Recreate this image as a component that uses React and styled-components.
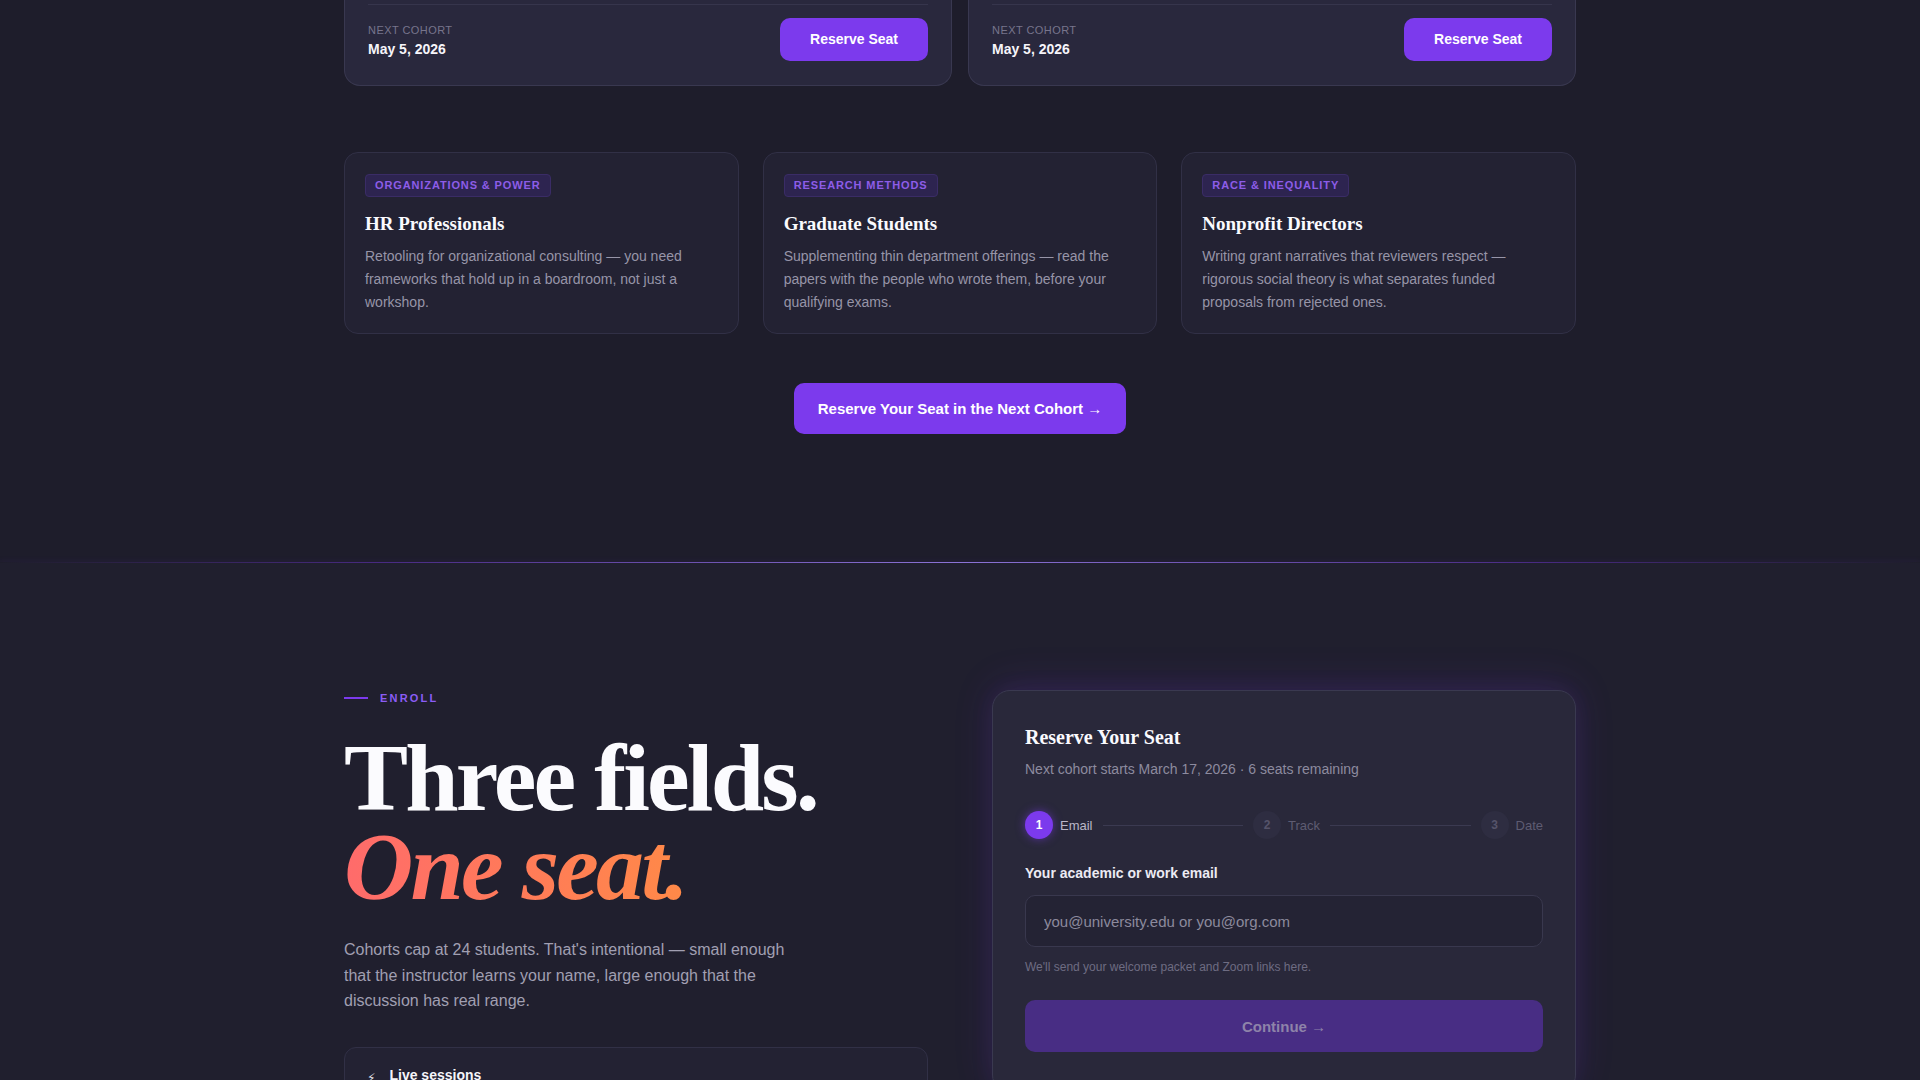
import styled, { createGlobalStyle } from 'styled-components';

const GlobalStyle = createGlobalStyle`
  * { box-sizing: border-box; }
  body {
    margin: 0;
    background: #1e1d2b;
    font-family: 'Liberation Sans', Arial, sans-serif;
    color: #f4f3f8;
  }
`;

const serif = `'Liberation Serif', 'Times New Roman', serif`;

export const Page = styled.div`
  min-height: 100vh;
  overflow: hidden;
`;

export const Section = styled.section`
  padding: ${(p) => p.$pad || '0'};
  background: ${(p) => p.$bg || 'transparent'};
`;

export const Container = styled.div`
  width: 1232px;
  margin: 0 auto;
`;

export const CohortGrid = styled.div`
  display: grid;
  grid-template-columns: 1fr 1fr;
  gap: 16px;
`;

export const CohortCard = styled.div`
  background: #29283d;
  border: 1px solid #393850;
  border-top: none;
  border-radius: 0 0 16px 16px;
  padding: 4px 23px 24px;
`;

export const CohortFooter = styled.div`
  display: flex;
  align-items: center;
  justify-content: space-between;
  border-top: 1px solid #36354c;
  padding-top: 13px;
`;

export const MetaLabel = styled.div`
  font-size: 11px;
  text-transform: uppercase;
  letter-spacing: 0.04em;
  color: #77758c;
  line-height: 14px;
  margin-top: 1px;
`;

export const MetaValue = styled.div`
  font-size: 14px;
  font-weight: 700;
  color: #f6f5fa;
  margin-top: 3px;
  line-height: 18px;
`;

export const Button = styled.button`
  border: none;
  border-radius: 10px;
  background: #7c3aed;
  color: #fff;
  font-family: 'Liberation Sans', Arial, sans-serif;
  font-weight: 700;
  font-size: ${(p) => (p.$big ? '15px' : '14px')};
  line-height: 19px;
  padding: ${(p) => (p.$big ? '16px 24px' : '12px 30px')};
  cursor: pointer;
`;

export const AudienceGrid = styled.div`
  display: grid;
  grid-template-columns: repeat(3, 1fr);
  gap: 24px;
  margin-top: 66px;
`;

export const AudienceCard = styled.div`
  background: #232233;
  border: 1px solid #313046;
  border-radius: 14px;
  padding: 21px 20px 19px;
`;

export const Tag = styled.span`
  display: inline-block;
  font-size: 11px;
  font-weight: 700;
  letter-spacing: 0.08em;
  text-transform: uppercase;
  color: #8d5de8;
  background: #2d2450;
  border: 1px solid #3a2c66;
  border-radius: 4px;
  padding: 4px 9px;
  line-height: 13px;
`;

export const CardTitle = styled.h3`
  font-family: ${serif};
  font-size: 19px;
  font-weight: 700;
  line-height: 26px;
  margin: 14px 0 0;
  color: #fafafe;
`;

export const CardText = styled.p`
  font-size: 14px;
  line-height: 23px;
  color: #9795a8;
  margin: 8px 0 0;
`;

export const CtaRow = styled.div`
  display: flex;
  justify-content: center;
  margin-top: 49px;
`;

export const GlowLine = styled.div`
  height: 1px;
  background: linear-gradient(
    90deg,
    rgba(124, 58, 237, 0) 0%,
    rgba(124, 58, 237, 0.45) 20%,
    #8b73d6 50%,
    rgba(124, 58, 237, 0.45) 80%,
    rgba(124, 58, 237, 0) 100%
  );
  box-shadow: 0 1px 6px rgba(124, 58, 237, 0.35);
`;

export const EnrollGrid = styled.div`
  display: grid;
  grid-template-columns: 1fr 1fr;
  gap: 64px;
  align-items: start;
`;

export const Eyebrow = styled.div`
  display: flex;
  align-items: center;
  gap: 12px;
  font-size: 11px;
  font-weight: 700;
  letter-spacing: 0.2em;
  color: #8b5cf6;
  line-height: 16px;
  &::before {
    content: '';
    width: 24px;
    height: 2px;
    background: #7c3aed;
  }
`;

export const Headline = styled.h2`
  font-family: ${serif};
  font-size: 96px;
  font-weight: 700;
  line-height: 89px;
  letter-spacing: -0.03em;
  margin: 27px 0 0;
  color: #fbfbfe;
`;

export const Accent = styled.em`
  display: inline-block;
  font-style: italic;
  background: linear-gradient(90deg, #ff6b6b 0%, #ff8a47 100%);
  -webkit-background-clip: text;
  background-clip: text;
  color: transparent;
  padding-right: 6px;
`;

export const Lead = styled.p`
  font-size: 16px;
  line-height: 25.6px;
  color: #a19fb2;
  max-width: 460px;
  margin: 26px 0 0;
`;

export const Feature = styled.div`
  margin-top: 33px;
  background: #232233;
  border: 1px solid #313046;
  border-radius: 12px;
  padding: 14px 22px 16px;
`;

export const FeatureHead = styled.div`
  display: flex;
  align-items: center;
  gap: 14px;
  font-size: 14px;
  font-weight: 700;
  line-height: 20px;
  color: #f6f5fa;
`;

export const FeatureIcon = styled.span`
  font-family: 'DejaVu Sans', sans-serif;
  font-size: 12px;
  color: #e8e6f0;
  margin-top: 6px;
`;

export const FormCard = styled.div`
  background: #29283a;
  border: 1px solid #3a3950;
  border-radius: 18px;
  padding: 32px 32px 40px;
  box-shadow: 0 -6px 40px rgba(124, 58, 237, 0.14), 0 0 24px rgba(124, 58, 237, 0.08);
`;

export const FormTitle = styled.h3`
  font-family: ${serif};
  font-size: 20px;
  font-weight: 700;
  line-height: 28px;
  margin: 0;
  color: #fafafe;
`;

export const FormSub = styled.p`
  font-size: 14px;
  line-height: 22px;
  color: #8d8b9f;
  margin: 7px 0 0;
`;

export const Stepper = styled.div`
  display: flex;
  align-items: center;
  gap: 10px;
  margin-top: 31px;
`;

export const Step = styled.div`
  display: flex;
  align-items: center;
  gap: 7px;
  font-size: 13px;
  color: ${(p) => (p.$active ? '#b9b7c8' : '#5e5c72')};
`;

export const StepDot = styled.span`
  width: 28px;
  height: 28px;
  border-radius: 50%;
  display: flex;
  align-items: center;
  justify-content: center;
  font-size: 12px;
  font-weight: 700;
  background: ${(p) => (p.$active ? '#7c3aed' : '#2e2d41')};
  color: ${(p) => (p.$active ? '#fff' : '#56546a')};
  box-shadow: ${(p) => (p.$active ? '0 0 10px rgba(124, 58, 237, 0.55)' : 'none')};
`;

export const StepLine = styled.span`
  flex: 1;
  height: 1px;
  background: #3b3a51;
`;

export const FieldLabel = styled.label`
  display: block;
  font-size: 14px;
  font-weight: 700;
  line-height: 20px;
  color: #ecebf3;
  margin-top: 24px;
`;

export const Input = styled.input`
  display: block;
  width: 100%;
  height: 52px;
  margin-top: 12px;
  background: #242334;
  border: 1px solid #39384e;
  border-radius: 10px;
  padding: 0 18px;
  font-family: 'Liberation Sans', Arial, sans-serif;
  font-size: 15px;
  color: #f4f3f8;
  outline: none;
  &::placeholder { color: #8c8a9d; }
`;

export const Helper = styled.p`
  font-size: 12px;
  line-height: 18px;
  color: #6e6c82;
  margin: 11px 0 0;
`;

export const SubmitButton = styled.button`
  display: block;
  width: 100%;
  height: 52px;
  margin-top: 24px;
  border: none;
  border-radius: 10px;
  background: #482d84;
  color: #8e83a9;
  font-family: 'Liberation Sans', Arial, sans-serif;
  font-size: 15px;
  font-weight: 700;
  cursor: not-allowed;
`;

const cohorts = [{ date: 'May 5, 2026' }, { date: 'May 5, 2026' }];

const audiences = [
  {
    tag: 'Organizations & Power',
    title: 'HR Professionals',
    text: 'Retooling for organizational consulting — you need frameworks that hold up in a boardroom, not just a workshop.',
  },
  {
    tag: 'Research Methods',
    title: 'Graduate Students',
    text: 'Supplementing thin department offerings — read the papers with the people who wrote them, before your qualifying exams.',
  },
  {
    tag: 'Race & Inequality',
    title: 'Nonprofit Directors',
    text: 'Writing grant narratives that reviewers respect — rigorous social theory is what separates funded proposals from rejected ones.',
  },
];

const steps = ['Email', 'Track', 'Date'];

export default function App() {
  return (
    <Page>
      <GlobalStyle />
      <Section $pad="0 0 128px">
        <Container>
          <CohortGrid>
            {cohorts.map((c, i) => (
              <CohortCard key={i}>
                <CohortFooter>
                  <div>
                    <MetaLabel>Next cohort</MetaLabel>
                    <MetaValue>{c.date}</MetaValue>
                  </div>
                  <Button>Reserve Seat</Button>
                </CohortFooter>
              </CohortCard>
            ))}
          </CohortGrid>

          <AudienceGrid>
            {audiences.map((a) => (
              <AudienceCard key={a.title}>
                <Tag>{a.tag}</Tag>
                <CardTitle>{a.title}</CardTitle>
                <CardText>{a.text}</CardText>
              </AudienceCard>
            ))}
          </AudienceGrid>

          <CtaRow>
            <Button $big>Reserve Your Seat in the Next Cohort →</Button>
          </CtaRow>
        </Container>
      </Section>

      <GlowLine />

      <Section $pad="127px 0 96px" $bg="#201f2e">
        <Container>
          <EnrollGrid>
            <div>
              <Eyebrow>ENROLL</Eyebrow>
              <Headline>
                Three fields.
                <br />
                <Accent>One seat.</Accent>
              </Headline>
              <Lead>
                Cohorts cap at 24 students. That's intentional — small enough that the
                instructor learns your name, large enough that the discussion has real range.
              </Lead>
              <Feature>
                <FeatureHead>
                  <FeatureIcon>⚡</FeatureIcon>
                  Live sessions
                </FeatureHead>
                <CardText>Two 90-minute seminars a week, recorded for the weeks life gets in the way.</CardText>
              </Feature>
            </div>

            <FormCard>
              <FormTitle>Reserve Your Seat</FormTitle>
              <FormSub>Next cohort starts March 17, 2026 · 6 seats remaining</FormSub>
              <Stepper>
                {steps.map((s, i) => (
                  <>
                    <Step key={s} $active={i === 0}>
                      <StepDot $active={i === 0}>{i + 1}</StepDot>
                      {s}
                    </Step>
                    {i < steps.length - 1 && <StepLine key={s + '-line'} />}
                  </>
                ))}
              </Stepper>
              <FieldLabel htmlFor="email">Your academic or work email</FieldLabel>
              <Input id="email" type="email" placeholder="you@university.edu or you@org.com" />
              <Helper>We'll send your welcome packet and Zoom links here.</Helper>
              <SubmitButton disabled>Continue →</SubmitButton>
            </FormCard>
          </EnrollGrid>
        </Container>
      </Section>
    </Page>
  );
}
